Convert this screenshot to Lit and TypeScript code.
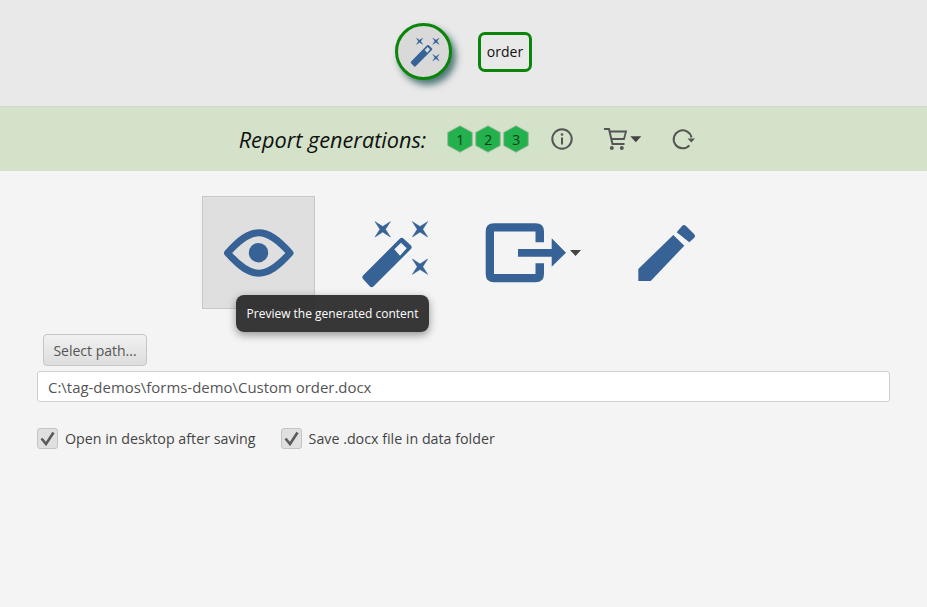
import { LitElement, html, css, svg } from "lit";
import { customElement } from "lit/decorators.js";

const BLUE = "#366295";
const star = (cx: number, cy: number, r: number) => {
  const k = r * 0.36;
  return svg`<path d="M${cx - r} ${cy - r}L${cx} ${cy - k}L${cx + r} ${cy - r}L${cx + k} ${cy}L${cx + r} ${cy + r}L${cx} ${cy + k}L${cx - r} ${cy + r}L${cx - k} ${cy}Z" fill="${BLUE}" stroke="${BLUE}" stroke-width="0.6" stroke-linejoin="round"/>`;
};
const wand = svg`
  ${star(32.7, 14.3, 7.6)}${star(70, 14.3, 7.6)}${star(70, 51.7, 7.6)}
  <path fill-rule="evenodd" d="M13.3 60.3L49.7 23.7Q51.7 21.7 53.7 23.7L60.7 30.3Q62.7 32.3 60.7 34.3L23.7 71.3Q21.7 73.3 19.7 71.3L13.3 64.3Q11.3 62.3 13.3 60.3ZM51 27.7L44.3 34.3L50 40.7L56.7 33.3Z" fill="${BLUE}"/>
`;

@customElement("app-root")
export class AppRoot extends LitElement {
  static styles = css`
    :host {
      display: block;
      width: 927px;
      height: 607px;
      background: #f4f4f4;
      font-family: "Open Sans", "Noto Sans", sans-serif;
      color: #111;
      overflow: hidden;
    }
    .top {
      box-sizing: border-box;
      background: #e9e9e9;
      border-bottom: 1px solid #d4d8d0;
      height: 107px;
      display: flex;
      align-items: center;
      justify-content: center;
      gap: 26px;
      padding-bottom: 3px;
    }
    .circle {
      width: 57px;
      height: 57px;
      box-sizing: border-box;
      border-radius: 50%;
      border: 3px solid #0a850a;
      background: #d9d9d9;
      box-shadow: 4px 5px 7px rgba(30, 80, 80, 0.75);
      display: flex;
      align-items: center;
      justify-content: center;
    }
    .circle svg { width: 40px; height: 35px; display: block; margin: 2px 0 0 3px; }
    .tag {
      width: 54px;
      height: 40px;
      box-sizing: border-box;
      border: 3px solid #0a850a;
      border-radius: 7px;
      display: flex;
      align-items: center;
      justify-content: center;
      font-size: 14px;
      color: #111;
    }
    .bar {
      height: 64px;
      background: #d3e2c9;
      display: flex;
      align-items: center;
      justify-content: center;
      padding-left: 7px;
    }
    .title { font-style: italic; font-size: 21.7px; color: #111; margin-right: 21px; }
    .hexes { display: flex; gap: 2px; margin-right: 21px; }
    .hex { position: relative; width: 26px; height: 28px; display: flex; align-items: center; justify-content: center; font-size: 14px; color: #0d3d1a; }
    .hex svg { position: absolute; inset: 0; }
    .hex span { position: relative; }
    .tools { display: flex; align-items: center; }
    .info { margin-right: 30px; }
    .cart { margin-right: 29px; }
    .main { position: relative; padding: 25px 37px 0; }
    .actions { display: flex; justify-content: center; gap: 25px; padding-left: 4px; }
    .act { width: 113px; height: 113px; box-sizing: border-box; }
    .act svg { display: block; width: 113px; height: 113px; }
    .act.on { background: #dfdfdf; border: 1px solid #c8c8c8; }
    .act.on svg { margin: -1px; }
    .tip {
      position: absolute;
      left: 236px;
      top: 124px;
      width: 193px;
      height: 37px;
      box-sizing: border-box;
      border-radius: 8px;
      background: rgba(42, 42, 42, 0.94);
      color: #fff;
      font-size: 12px;
      display: flex;
      align-items: center;
      justify-content: center;
      box-shadow: 0 3px 8px rgba(0, 0, 0, 0.4);
    }
    .btn {
      margin: 25px 0 5px 6px;
      width: 104px;
      height: 32px;
      box-sizing: border-box;
      border: 1px solid #c6c6c6;
      border-radius: 4px;
      background: linear-gradient(#f1f1f1, #dddddd);
      color: #555;
      font: inherit;
      font-size: 14px;
      padding: 0;
      display: block;
    }
    .path {
      height: 31px;
      box-sizing: border-box;
      width: 853px;
      background: #fff;
      border: 1px solid #cfcfcf;
      border-radius: 3px;
      padding: 0 10px;
      font-size: 14.95px;
      color: #555;
      display: flex;
      align-items: center;
    }
    .checks { display: flex; gap: 25px; margin-top: 26px; }
    .check { display: flex; align-items: center; gap: 7px; font-size: 14.25px; color: #444; }
    .box {
      width: 21px;
      height: 21px;
      box-sizing: border-box;
      background: #e0e0e0;
      border: 1px solid #c4c4c4;
      border-radius: 3px;
      display: flex;
      align-items: center;
      justify-content: center;
    }
  `;

  hex(n: number) {
    return html`<div class="hex">
      <svg width="26" height="28" viewBox="0 0 26 28"><path d="M13 .7L25.3 7.4V20.6L13 27.3L.7 20.6V7.4Z" fill="#22b14c" stroke="#9fb8a0" stroke-width="1"/></svg>
      <span>${n}</span>
    </div>`;
  }

  check(label: string) {
    return html`<div class="check">
      <div class="box"><svg width="15" height="15" viewBox="0 0 15 15"><path d="M1.5 7.5L6 13L13.5 1.5" fill="none" stroke="#5a5a5a" stroke-width="2.6"/></svg></div>
      <span>${label}</span>
    </div>`;
  }

  render() {
    return html`
      <div class="top">
        <div class="circle"><svg viewBox="0 0 90 80">${wand}</svg></div>
        <div class="tag">order</div>
      </div>
      <div class="bar">
        <span class="title">Report generations:</span>
        <div class="hexes">${[1, 2, 3].map((n) => this.hex(n))}</div>
        <div class="tools">
          <svg class="info" width="24" height="24" viewBox="0 0 24 24">
            <circle cx="12" cy="12" r="9.7" fill="none" stroke="#555" stroke-width="2"/>
            <rect x="11" y="10.5" width="2" height="7" fill="#555"/><circle cx="12" cy="7.5" r="1.3" fill="#555"/>
          </svg>
          <svg class="cart" width="38" height="24" viewBox="0 0 38 24">
            <path d="M0 2H5L8.5 17H20.5" fill="none" stroke="#555" stroke-width="2"/>
            <path d="M5.5 4.5H22L20 12H7" fill="none" stroke="#555" stroke-width="1.8"/>
            <circle cx="7.8" cy="21" r="2" fill="#555"/><circle cx="17.8" cy="21" r="2" fill="#555"/>
            <path d="M26.3 9.3H37.3L31.8 15.3Z" fill="#444"/>
          </svg>
          <svg width="24" height="24" viewBox="0 0 24 24">
            <path d="M20.5 10.5A9 9 0 1 0 18.4 18.3" fill="none" stroke="#555" stroke-width="2"/>
            <path d="M16.5 11.5H24L20.3 15.5Z" fill="#555"/>
          </svg>
        </div>
      </div>
      <div class="main">
        <div class="actions">
          <div class="act on">
            <svg viewBox="202 196 113 113">
              <path d="M227.5 253C240 239 249 232.8 258.7 232.8C268.5 232.8 277.5 239 290 253C277.5 267 268.5 273.2 258.7 273.2C249 273.2 240 267 227.5 253Z" fill="none" stroke="${BLUE}" stroke-width="7" stroke-linejoin="round"/>
              <circle cx="258.5" cy="252.7" r="9.7" fill="${BLUE}"/>
            </svg>
          </div>
          <div class="act">
            <svg viewBox="340 196 113 113"><g transform="translate(350 215)">${wand}</g></svg>
          </div>
          <div class="act">
            <svg viewBox="478 196 113 113">
              <path d="M544 242.3H535.5V231.5H494V274H535.5V263.3H544V274Q544 282.3 535.5 282.3H494Q485.7 282.3 485.7 274V231.5Q485.7 223.3 494 223.3H535.5Q544 223.3 544 231.5Z" fill="${BLUE}"/>
              <path d="M518 249H551.7V238.3L566 252.7L551.7 266.7V256.7H518Z" fill="${BLUE}"/>
              <path d="M570 250H581L575.5 256Z" fill="#444"/>
            </svg>
          </div>
          <div class="act">
            <svg viewBox="616 196 113 113">
              <path d="M638.3 269L673.3 235L684.3 245.7L650.7 281H638.3Z" fill="${BLUE}"/>
              <path d="M676.7 232.3L682 226Q684 224 686 226L694 234Q696 236 694 238L689.3 242.3Z" fill="${BLUE}"/>
            </svg>
          </div>
        </div>
        <div class="tip">Preview the generated content</div>
        <button class="btn">Select path...</button>
        <div class="path">C:\\tag-demos\\forms-demo\\Custom order.docx</div>
        <div class="checks">
          ${this.check("Open in desktop after saving")}
          ${this.check("Save .docx file in data folder")}
        </div>
      </div>
    `;
  }
}
